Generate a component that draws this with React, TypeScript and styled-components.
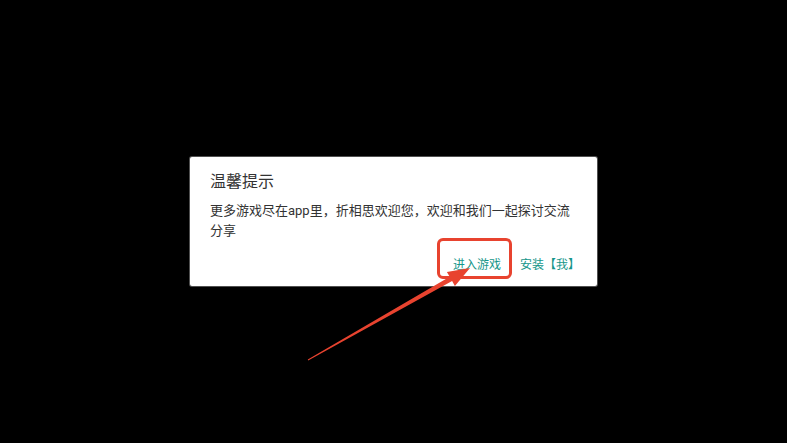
import React from 'react';
import styled, { createGlobalStyle } from 'styled-components';

const GlobalStyle = createGlobalStyle`
  html, body {
    margin: 0;
    padding: 0;
    background: #000;
  }
  body {
    font-family: Roboto, "Noto Sans CJK SC", "Noto Sans", sans-serif;
  }
`;

const Screen = styled.div`
  position: relative;
  width: 787px;
  height: 443px;
  background: #000;
  display: flex;
  align-items: center;
  justify-content: center;
  overflow: hidden;
`;

const Dialog = styled.div`
  width: 407px;
  box-sizing: border-box;
  background: #fff;
  border-radius: 2px;
  box-shadow: 0 0 0 1px rgba(160, 160, 160, 0.5);
  display: flex;
  flex-direction: column;
`;

const Content = styled.div`
  padding: 14px 20px 0;
`;

const Title = styled.h2`
  margin: 0;
  font-size: 16px;
  line-height: 22px;
  font-weight: 400;
  color: #333;
`;

const Message = styled.p`
  margin: 8px 0 0;
  font-size: 13px;
  line-height: 19.5px;
  color: #333;
`;

const Actions = styled.div`
  display: flex;
  justify-content: flex-end;
  gap: 3px;
  padding: 5px 9px;
`;

const ActionButton = styled.button`
  position: relative;
  height: 36px;
  padding: 0 8px;
  border: none;
  background: none;
  font-family: inherit;
  font-size: 12px;
  color: #16968a;
  cursor: pointer;
`;

const Highlight = styled.span`
  position: absolute;
  left: -8px;
  right: -3px;
  top: -7px;
  bottom: 2px;
  border: 3px solid #e8432f;
  border-radius: 6px;
  pointer-events: none;
`;

const Pointer = styled.svg`
  position: absolute;
  left: 0;
  top: 0;
  pointer-events: none;
`;

const App: React.FC = () => {
  return (
    <>
      <GlobalStyle />
      <Screen>
        <Dialog>
          <Content>
            <Title>温馨提示</Title>
            <Message>更多游戏尽在app里，折相思欢迎您，欢迎和我们一起探讨交流分享</Message>
          </Content>
          <Actions>
            <ActionButton>
              进入游戏
              <Highlight />
            </ActionButton>
            <ActionButton>安装【我】</ActionButton>
          </Actions>
        </Dialog>
        <Pointer width="787" height="443" viewBox="0 0 787 443">
          <polygon
            fill="#e8432f"
            points="308.2,360.4 452.1,281.1 454.9,285.9 470,268 446.9,271.9 449.7,276.7 307.8,359.6"
          />
        </Pointer>
      </Screen>
    </>
  );
};

export default App;
